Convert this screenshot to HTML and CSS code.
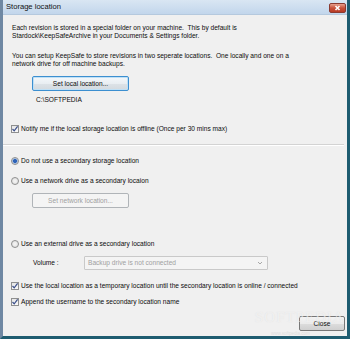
FILE: index.html
```html
<!DOCTYPE html>
<html>
<head>
<meta charset="utf-8">
<link rel="stylesheet" href="styles.css">
</head>
<body>
<div class="window">
  <div class="titlebar">
    <span class="title">Storage location</span>
    <span class="closex"><svg width="17" height="10" viewBox="0 0 17 10"><path d="M6.5 3 L10.5 7 M10.5 3 L6.5 7" stroke="#fff" stroke-width="1.6"/></svg></span>
  </div>
  <div class="content">
    <p class="para">Each revision is stored in a special folder on your machine.&nbsp; This by default is<br>Stardock\KeepSafeArchive in your Documents &amp; Settings folder.</p>
    <p class="para para2">You can setup KeepSafe to store revisions in two seperate locations.&nbsp; One locally and one on a<br>network drive for off machine backups.</p>
    <div class="indent"><span class="btn btn-focus btn-wide">Set local location...</span></div>
    <div class="path">C:\SOFTPEDIA</div>
    <div class="row row-notify"><span class="cb"><svg width="8" height="8" viewBox="0 0 8 8"><path d="M1.5 4 L3.2 5.9 L6.6 1.4" stroke="#3b4f8a" stroke-width="1.2" fill="none"/></svg></span>Notify me if the local storage location is offline (Once per 30 mins max)</div>
    <div class="sep"></div>
    <div class="row row-r1"><span class="rb on"></span>Do not use a secondary storage location</div>
    <div class="row row-r2"><span class="rb"></span>Use a network drive as a secondary locaion</div>
    <div class="indent indent-net"><span class="btn btn-disabled btn-wide">Set network location...</span></div>
    <div class="row row-r3"><span class="rb"></span>Use an external drive as a secondary location</div>
    <div class="volume">
      <span class="vol-label">Volume :</span>
      <span class="combo"><span class="combo-text">Backup drive is not connected</span><svg width="6" height="4" viewBox="0 0 6 4"><path d="M1 1 L3 3 L5 1" stroke="#a8a8a8" stroke-width="1" fill="none"/></svg></span>
    </div>
    <div class="row row-c4"><span class="cb"><svg width="8" height="8" viewBox="0 0 8 8"><path d="M1.5 4 L3.2 5.9 L6.6 1.4" stroke="#3b4f8a" stroke-width="1.2" fill="none"/></svg></span>Use the local location as a temporary location until the secondary location is online / connected</div>
    <div class="row row-c5"><span class="cb"><svg width="8" height="8" viewBox="0 0 8 8"><path d="M1.5 4 L3.2 5.9 L6.6 1.4" stroke="#3b4f8a" stroke-width="1.2" fill="none"/></svg></span>Append the username to the secondary location name</div>
    <div class="footer"><span class="btn btn-close">Close</span></div>
  </div>
  <div class="watermark">SOFTPEDIA</div>
  <div class="watermark-url">www.softpedia.com</div>
</div>
</body>
</html>
```
FILE: styles.css
```css
html, body {
  margin: 0;
  padding: 0;
  width: 350px;
  height: 339px;
  overflow: hidden;
  background: #f0f0f0;
}
.window {
  position: relative;
  width: 350px;
  height: 339px;
  box-sizing: border-box;
  border-left: 3px solid #6f88a3;
  border-right: 3px solid #1e5c70;
  border-bottom: 3px solid #1e5c70;
  background: #f0f0f0;
  font-family: "Liberation Sans", Arial, sans-serif;
  font-size: 6.6px;
  line-height: 8px;
  color: #0c0c0c;
  display: flex;
  flex-direction: column;
}
.titlebar {
  height: 14px;
  flex: none;
  display: flex;
  align-items: center;
  justify-content: space-between;
  padding: 0 1px 0 3px;
  background: linear-gradient(#d9e6f3, #c2d6ec);
  border-bottom: 1px solid #b5c9de;
}
.title {
  font-size: 7.6px;
  color: #111;
}
.closex {
  width: 17px;
  height: 10px;
  margin-top: 1px;
  border-radius: 2px;
  background: linear-gradient(#e8a08e, #c8523c 50%, #b83a24);
  border: 1px solid #8a3a30;
  box-sizing: border-box;
  display: flex;
  align-items: center;
  justify-content: center;
}
.closex svg { display: block; margin: -1px; }
.content {
  flex: 1;
  padding: 9px 0 0 9px;
  display: flex;
  flex-direction: column;
  align-items: flex-start;
}
.para { margin: 0; }
.para2 { margin-top: 12px; }
.indent { margin-left: 20px; margin-top: 8px; }
.btn {
  display: inline-flex;
  align-items: center;
  justify-content: center;
  height: 15px;
  box-sizing: border-box;
  border: 1px solid #777;
  border-radius: 2px;
  background: linear-gradient(#f4f4f4, #ebebeb 50%, #dddddd 51%, #cfcfcf);
  font-size: 6.6px;
}
.btn-wide { width: 97px; }
.btn-focus {
  border-color: #3c8fd0;
  background: linear-gradient(#f4f8fb, #e9eef2 50%, #dde3e8 51%, #d3d9de);
  box-shadow: inset 0 0 0 1px #bfe0f6;
}
.btn-disabled {
  border-color: #b0b4b8;
  background: #f4f4f4;
  color: #a0a0a0;
}
.path { margin: 5px 0 0 24px; }
.row {
  display: flex;
  align-items: center;
  height: 9px;
  white-space: nowrap;
}
.row-notify { margin-top: 20px; }
.cb {
  width: 8px;
  height: 8px;
  box-sizing: border-box;
  border: 1px solid #8e8f8f;
  background: linear-gradient(#e6e6e6, #fafafa);
  margin: 0 2px 0 -1px;
  flex: none;
  display: flex;
  align-items: center;
  justify-content: center;
}
.cb svg { display: block; margin: -1px; }
.rb {
  width: 8px;
  height: 8px;
  box-sizing: border-box;
  border-radius: 50%;
  border: 1px solid #8e8f8f;
  background: radial-gradient(circle, #f6f6f6, #dcdcdc);
  margin: 0 2px 0 -1px;
  flex: none;
}
.rb.on {
  background: radial-gradient(circle, #2d63b8 0 1.8px, #97b6e2 2.2px, #e4e4e4 3.4px);
}
.sep {
  align-self: stretch;
  margin: 11px 3px 0 -9px;
  height: 1px;
  border-top: 1px solid #d3d3d3;
  background: #fff;
}
.row-r1 { margin-top: 10px; }
.row-r2 { margin-top: 11px; }
.indent-net { margin-top: 8px; }
.row-r3 { margin-top: 31px; }
.volume {
  margin: 8px 0 0 21px;
  display: flex;
  align-items: center;
  height: 14px;
}
.vol-label { width: 51px; }
.combo {
  width: 184px;
  height: 14px;
  box-sizing: border-box;
  border: 1px solid #c9c9c9;
  background: #f4f4f4;
  color: #a0a0a0;
  display: flex;
  align-items: center;
  justify-content: space-between;
  padding: 0 4px 0 3px;
  border-radius: 1px;
}
.row-c4 { margin-top: 11px; }
.row-c5 { margin-top: 7px; }
.footer {
  align-self: stretch;
  display: flex;
  justify-content: flex-end;
  margin-top: 10px;
  padding-right: 2px;
}
.btn-close { width: 46px; }
.watermark {
  position: absolute;
  left: 252px;
  top: 313px;
  font-family: "Liberation Serif", serif;
  font-size: 15px;
  letter-spacing: 1px;
  color: rgba(255,255,255,0.55);
  text-shadow: 0 0 1px rgba(180,180,180,0.35);
  pointer-events: none;
}
.watermark-url {
  position: absolute;
  left: 268px;
  top: 330px;
  font-size: 4.5px;
  color: rgba(200,200,200,0.5);
}
```
